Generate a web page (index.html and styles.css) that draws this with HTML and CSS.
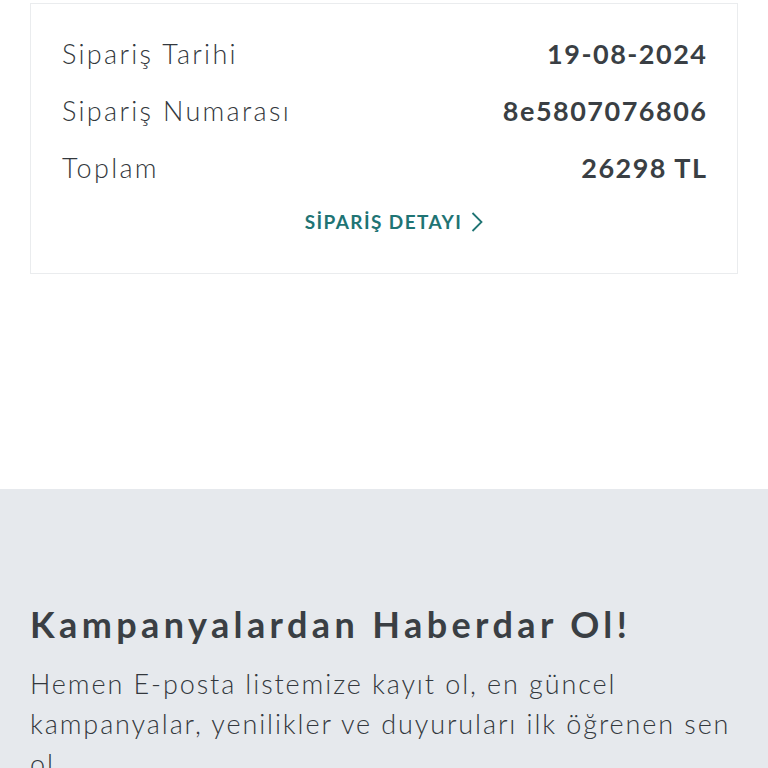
FILE: index.html
```html
<!DOCTYPE html>
<html lang="tr">
<head>
<meta charset="utf-8">
<link rel="stylesheet" href="styles.css">
</head>
<body>
<div class="top">
  <div class="card">
    <div class="row"><span class="label">Sipariş Tarihi</span><span class="value">19-08-2024</span></div>
    <div class="row"><span class="label">Sipariş Numarası</span><span class="value">8e5807076806</span></div>
    <div class="row"><span class="label">Toplam</span><span class="value">26298 TL</span></div>
    <a class="detail" href="#">SİPARİŞ DETAYI <svg class="chev" width="12" height="20" viewBox="0 0 12 20"><path d="M1.5 1 L10.5 10 L1.5 19" fill="none" stroke="#1f7474" stroke-width="1.8"/></svg></a>
  </div>
</div>
<div class="news">
  <h2 class="news-title">Kampanyalardan Haberdar Ol!</h2>
  <p class="news-text">Hemen E-posta listemize kayıt ol, en güncel kampanyalar, yenilikler ve duyuruları ilk öğrenen sen ol.</p>
</div>
</body>
</html>
```
FILE: styles.css
```css
html, body { margin: 0; padding: 0; }
body {
  width: 768px;
  height: 768px;
  overflow: hidden;
  background: #fff;
  font-family: Lato, "Noto Sans", sans-serif;
  color: #3a3f44;
}
.top {
  height: 489px;
  padding: 3px 30px 0;
  box-sizing: border-box;
}
.card {
  border: 1px solid #eaecee;
  height: 271px;
  box-sizing: border-box;
  padding: 21px 31px 0 31px;
  display: flex;
  flex-direction: column;
}
.row {
  display: flex;
  justify-content: space-between;
  align-items: baseline;
  height: 57px;
  line-height: 57px;
}
.label {
  font-size: 27px;
  font-weight: 300;
  letter-spacing: 2.3px;
  color: #33383d;
}
.value {
  font-size: 27px;
  font-weight: 700;
  letter-spacing: 1.5px;
  margin-right: -1.5px;
}
.detail {
  align-self: center;
  margin-top: 14px;
  margin-left: 20px;
  display: flex;
  align-items: center;
  gap: 9px;
  color: #1f7474;
  text-decoration: none;
  font-size: 19px;
  line-height: 24px;
  font-weight: 700;
  letter-spacing: 1.4px;
}
.news {
  background: #e6e9ed;
  height: 279px;
  padding: 113px 30px 0;
  box-sizing: border-box;
}
.news-title {
  margin: 0;
  font-size: 36px;
  font-weight: 700;
  letter-spacing: 4.4px;
  line-height: 44px;
}
.news-text {
  margin: 18px 0 0;
  font-size: 27px;
  line-height: 40px;
  font-weight: 300;
  letter-spacing: 1.9px;
  color: #33383d;
}
```
